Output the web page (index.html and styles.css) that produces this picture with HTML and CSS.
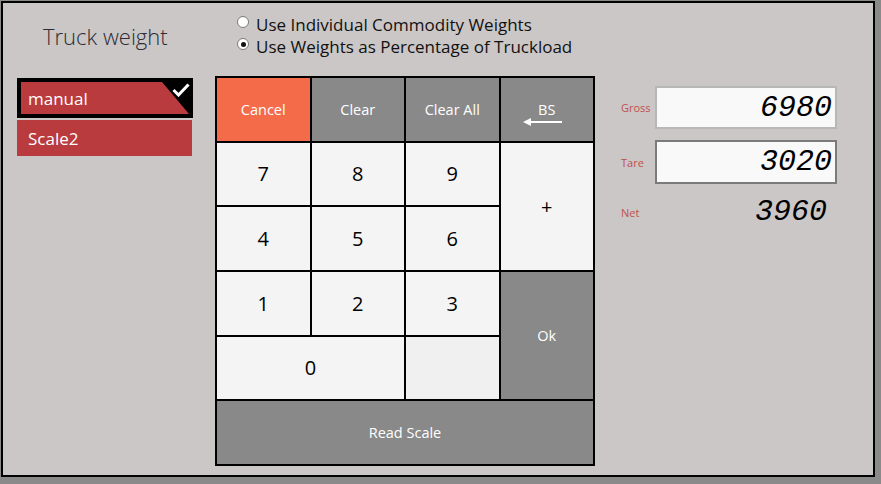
FILE: index.html
```html
<!DOCTYPE html>
<html lang="en">
<head>
    <meta charset="UTF-8">
    <meta name="viewport" content="width=device-width, initial-scale=1.0">
    <title>Truck weight</title>
    <link rel="stylesheet" href="styles.css">
</head>
<body>
    <div class="window">
        <div class="title">Truck weight</div>

        <div class="options">
            <label class="option"><span class="radio"></span>Use Individual Commodity Weights</label>
            <label class="option"><span class="radio checked"></span>Use Weights as Percentage of Truckload</label>
        </div>

        <ul class="scales">
            <li class="scale selected">
                <span class="scale-name">manual</span>
                <svg class="check" viewBox="0 0 18 14" width="18" height="14">
                    <polyline points="1.5,7 6.5,12 16.5,1.5" fill="none" stroke="white" stroke-width="3"/>
                </svg>
            </li>
            <li class="scale"><span class="scale-name">Scale2</span></li>
        </ul>

        <div class="keypad">
            <button class="key action cancel">Cancel</button>
            <button class="key action">Clear</button>
            <button class="key action">Clear All</button>
            <button class="key action bs">BS
                <svg class="bs-arrow" viewBox="0 0 40 10" width="40" height="10">
                    <line x1="6" y1="5" x2="39" y2="5" stroke="white" stroke-width="2"/>
                    <polygon points="0,5 8,1 8,9" fill="white"/>
                </svg>
            </button>

            <button class="key">7</button>
            <button class="key">8</button>
            <button class="key">9</button>
            <button class="key plus">+</button>

            <button class="key">4</button>
            <button class="key">5</button>
            <button class="key">6</button>

            <button class="key">1</button>
            <button class="key">2</button>
            <button class="key">3</button>
            <button class="key action ok">Ok</button>

            <button class="key zero">0</button>
            <div class="key blank"></div>

            <button class="key action read">Read Scale</button>
        </div>

        <div class="weights">
            <span class="weight-label">Gross</span>
            <div class="readout">6980</div>

            <span class="weight-label">Tare</span>
            <div class="readout focused">3020</div>

            <span class="weight-label">Net</span>
            <div class="readout plain">3960</div>
        </div>
    </div>
</body>
</html>
```

FILE: styles.css
```css
:root {
    --frame: #cbc7c6;
    --brick: #b93b3e;
    --orange: #f46b4a;
    --key-gray: #898989;
    --key-light: #f4f4f4;
    --label-red: #c0504d;
}

html, body {
    margin: 0;
    padding: 0;
    background-color: #8a8a8a;
    font-family: "Open Sans", "Noto Sans", sans-serif;
}

.window {
    margin: 1px 0 0 1px;
    width: 870px;
    height: 472px;
    border: 2px solid #000;
    background-color: var(--frame);
    display: grid;
    grid-template-columns: 212px 380px 1fr;
    grid-template-rows: 73px 390px 1fr;
}

.title {
    padding: 18px 0 0 40px;
    font-size: 22px;
    font-weight: 300;
    color: #2c2c36;
}

.options {
    grid-column: 2 / 4;
    padding: 10px 0 0 22px;
    display: flex;
    flex-direction: column;
}

.option {
    display: flex;
    align-items: center;
    height: 22px;
    font-size: 17px;
    color: #111;
}

.radio {
    width: 10px;
    height: 10px;
    margin-right: 7px;
    border: 1px solid #7a7a7a;
    border-radius: 50%;
    background-color: #fff;
    display: flex;
    align-items: center;
    justify-content: center;
    margin-top: -4px;
}

.radio.checked::after {
    content: "";
    width: 5px;
    height: 5px;
    border-radius: 50%;
    background-color: #111;
}

.scales {
    list-style: none;
    margin: 0;
    padding: 2px 0 0 14px;
    display: flex;
    flex-direction: column;
    gap: 2px;
}

.scale {
    position: relative;
    width: 175px;
    height: 36px;
    background-color: var(--brick);
    color: #fff;
    font-size: 17px;
    display: flex;
}

.scale.selected {
    width: 168px;
    height: 32px;
    padding: 4px;
    background-color: #000;
}

.scale-name {
    flex: 1;
    display: flex;
    align-items: center;
    padding-left: 11px;
    background-color: var(--brick);
}

.scale.selected .scale-name {
    padding-left: 7px;
    clip-path: polygon(0 0, 141px 0, 100% 100%, 0 100%);
}

.check {
    position: absolute;
    top: 5px;
    right: 3px;
}

.keypad {
    display: grid;
    grid-template-columns: repeat(4, 1fr);
    grid-template-rows: repeat(6, 1fr);
    gap: 2px;
    padding: 2px;
    background-color: #000;
}

.key {
    border: none;
    margin: 0;
    padding: 0;
    background-color: var(--key-light);
    color: #000;
    font-family: inherit;
    font-size: 20px;
    display: flex;
    align-items: center;
    justify-content: center;
}

.key.action {
    background-color: var(--key-gray);
    color: #fff;
    font-size: 14.5px;
}

.key.cancel {
    background-color: var(--orange);
}

.key.bs {
    position: relative;
}

.bs-arrow {
    position: absolute;
    left: 22px;
    top: 39px;
}

.key.plus {
    grid-row: span 2;
}

.key.ok {
    grid-row: span 2;
}

.key.zero {
    grid-column: span 2;
}

.key.blank {
    background-color: #f0f0f0;
}

.key.read {
    grid-column: span 4;
}

.weights {
    padding: 10px 0 0 26px;
    display: grid;
    grid-template-columns: 34px 182px;
    grid-template-rows: 43px 44px 34px;
    row-gap: 11px;
    align-content: start;
}

.weight-label {
    font-size: 11px;
    color: var(--label-red);
    display: flex;
    align-items: center;
}

.readout {
    box-sizing: border-box;
    border: 2px solid #b7b7b7;
    background-color: #f9f9f9;
    padding-right: 3px;
    font-family: "Liberation Mono", "DejaVu Sans Mono", monospace;
    font-size: 30px;
    font-style: italic;
    color: #000;
    display: flex;
    align-items: center;
    justify-content: flex-end;
}

.readout.focused {
    border-color: #7b7b7b;
}

.readout.plain {
    border-color: transparent;
    background-color: transparent;
    padding-right: 8px;
}
```
